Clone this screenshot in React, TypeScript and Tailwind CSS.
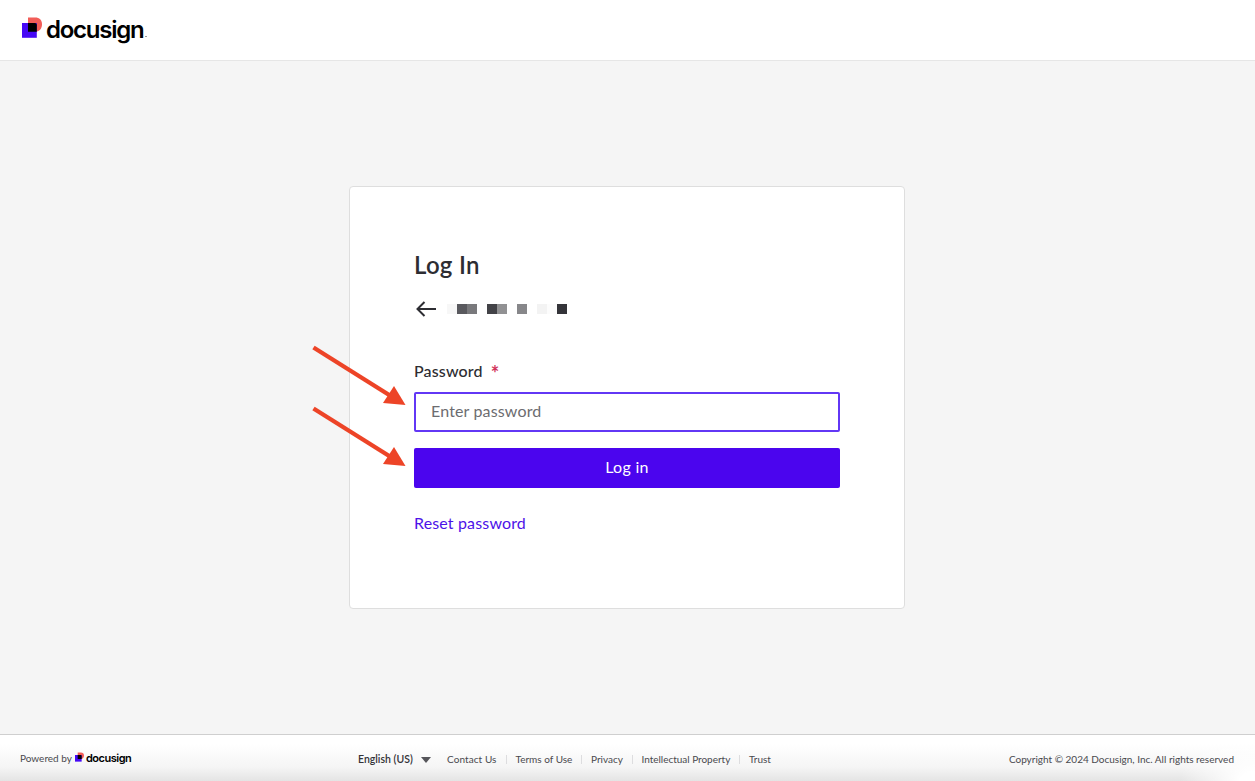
import { type ReactNode } from "react";

const footerLinks = [
	{ label: "Contact Us", width: "w-[50px]", spacing: "tracking-[0.08px]" },
	{ label: "Terms of Use", width: "w-[57px]", spacing: "tracking-normal" },
	{ label: "Privacy", width: "w-[32px]", spacing: "tracking-normal" },
	{ label: "Intellectual Property", width: "w-[89px]", spacing: "tracking-[-0.02px]" },
	{ label: "Trust", width: "w-[22px]", spacing: "tracking-normal" },
];

const hiddenEmail = [
	"bg-[#f7f7f7]",
	"bg-[#59595e]",
	"bg-[#79797c]",
	"bg-white",
	"bg-[#424247]",
	"bg-[#919193]",
	"bg-white",
	"bg-[#87878a]",
	"bg-white",
	"bg-[#f3f3f3]",
	"bg-[#fcfcfc]",
	"bg-[#343439]",
];

const LogoMark = ({ className }: { className: string }) => (
	<svg className={className} viewBox="0 0 20 21" fill="none">
		<path d="M6 .4h7.2c4.2 0 6.8 2.7 6.8 6.8 0 4.6-2.8 7.5-7 7.5H6z" fill="#f25d58" />
		<path d="M0 6h14.8v14.8H0z" fill="#4608f5" />
		<path d="M6 6h6.5c1.5 0 2.3.8 2.3 2.3v6.4H6z" fill="#000" />
	</svg>
);

const Pointer = ({ className }: { className: string }) => (
	<svg className={`absolute ${className}`} width="94" height="62" viewBox="0 0 94 62">
		<path d="M1.5 2.5 78 50.5" stroke="#ed4427" strokeWidth="4.4" />
		<path d="M93.5 60 71 58 82 41z" fill="#ed4427" />
	</svg>
);

const Label = ({ children }: { children: ReactNode }) => (
	<label htmlFor="password" className="flex h-6 items-center text-[16px] font-medium tracking-[0.15px]">
		{children}
	</label>
);

const App = () => {
	return (
		<div className="flex h-screen flex-col overflow-hidden bg-[#f5f5f5] font-['Lato','Liberation_Sans',sans-serif] text-[#2d2d32]">
			<header className="flex h-[61px] shrink-0 border-b border-[#e6e6e6] bg-white pl-[22px]">
				<LogoMark className="mt-[17px] h-[21px] w-5" />
				<div className="ml-1 pt-[13px] font-['Inter',sans-serif] text-[24px] leading-[34px] font-semibold tracking-[-1.25px] text-black">
					docusign
				</div>
				<span className="mt-[36px] ml-[2px] h-px w-[2px] bg-[#999]" />
			</header>

			<main className="flex flex-1 justify-center pt-[125px] pr-px">
				<div className="relative h-[423px] w-[556px] rounded-[4px] border border-[#dedede] bg-white px-16 pt-[63px]">
					<h1 className="h-[30px] text-[24px] leading-[30px] font-semibold tracking-[0.3px]">Log In</h1>

					<div className="mt-[19px] flex h-5 items-center">
						<svg className="ml-0.5 h-4 w-5" viewBox="0 0 20 16" fill="none" stroke="#2d2d32" strokeWidth="2">
							<path d="M20 8H1.5M8.5 1l-7 7 7 7" />
						</svg>
						<div className="ml-[11px] flex">
							{hiddenEmail.map((color, index) => (
								<div key={index} className={`size-2.5 ${color}`}></div>
							))}
						</div>
					</div>

					<div className="mt-10">
						<Label>
							Password <span className="ml-2 pt-[3px] text-[20px] leading-4 font-bold text-[#d1345b]">*</span>
						</Label>
						<input
							id="password"
							type="password"
							placeholder="Enter password"
							className="mt-[9px] block h-10 w-[426px] rounded-[2px] border-2 border-[#6237f5] px-[15px] pb-[3px] text-[16px] tracking-[0.15px] outline-0 placeholder:text-[#6c6c70]"
						/>
						<button className="mt-4 block h-10 w-[426px] rounded-[2px] bg-[#4b05ee] pb-0.5 text-[16px] tracking-[0.3px] text-white">
							Log in
						</button>
					</div>

					<a href="#" className="mt-[23px] block h-6 text-[16px] leading-6 tracking-[0.15px] text-[#4d12e8]">
						Reset password
					</a>

					<Pointer className="top-[158px] -left-[38px]" />
					<Pointer className="top-[219px] -left-[38px]" />
				</div>
			</main>

			<footer className="flex h-[47px] shrink-0 items-center border-t border-[#cfcfcf] bg-[radial-gradient(ellipse_75px_48px_at_bottom_right,#fff_20%,#ffffff00),linear-gradient(to_bottom,#fff_20%,#f5f5f5_70%,#e4e4e4)] pt-[3px] text-[10px] text-[#49494e]">
				<div className="flex w-[358px] items-center pb-0.5 pl-5">
					<div className="w-[55px] whitespace-nowrap">Powered by</div>
					<LogoMark className="mb-[3px] h-[10px] w-[9px]" />
					<div className="ml-0.5 font-['Inter',sans-serif] text-[11px] font-semibold tracking-[-0.5px] text-black">
						docusign
					</div>
				</div>
				<div className="flex items-center whitespace-nowrap">
					<div className="w-[56px] pt-px text-[10.5px] font-semibold text-[#333338]">English (US)</div>
					<svg className="ml-[7px] h-[6px] w-[10px]" viewBox="0 0 10 6">
						<path d="M0 0h10L5 6z" fill="#55555a" />
					</svg>
					<nav className="ml-4 flex items-center">
						{footerLinks.map((link, index) => (
							<div key={link.label} className="flex items-center">
								{index > 0 && <span className="mr-[9px] ml-[8.5px] h-[9px] w-px bg-[#dddddf]"></span>}
								<a href="#" className={`${link.width} ${link.spacing}`}>
									{link.label}
								</a>
							</div>
						))}
					</nav>
				</div>
				<div className="mr-[21px] ml-auto whitespace-nowrap">
					Copyright © 2024 Docusign, Inc. All rights reserved
				</div>
			</footer>
		</div>
	);
};

export default App;
